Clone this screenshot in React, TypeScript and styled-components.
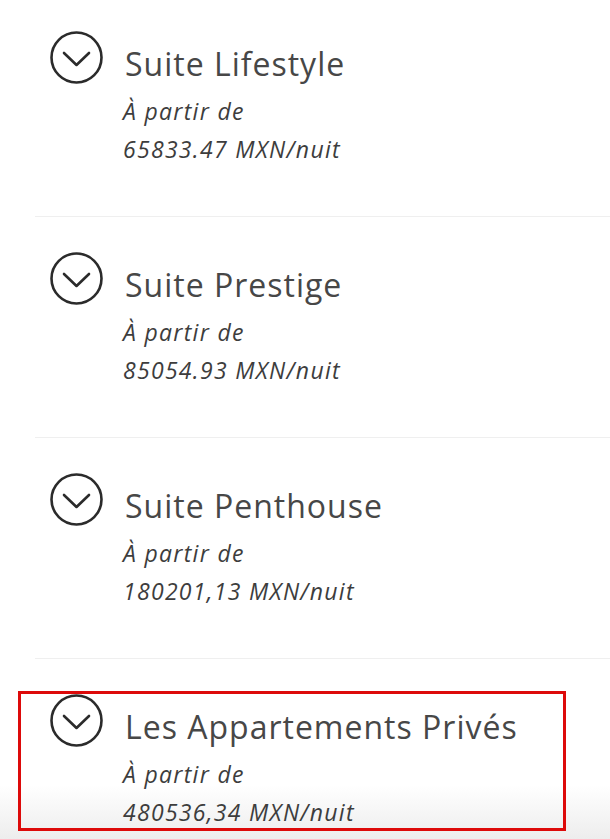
import React from 'react';
import styled, { createGlobalStyle } from 'styled-components';

const GlobalStyle = createGlobalStyle`
  html, body {
    margin: 0;
    padding: 0;
  }
  body {
    background: linear-gradient(to bottom, #ffffff 0, #ffffff 785px, #ededed 839px);
    font-family: "Open Sans", "Liberation Sans", sans-serif;
    overflow: hidden;
  }
`;

const Page = styled.div`
  height: 839px;
  padding-left: 35px;
  overflow: hidden;
`;

const List = styled.ul`
  list-style: none;
  margin: -4px 0 0;
  padding: 0;
`;

const Item = styled.li`
  position: relative;
  box-sizing: border-box;
  height: 221px;
  padding: 35px 0 0 15px;
  border-bottom: 1px solid #efefef;
  display: flex;
  align-items: flex-start;
  gap: 22px;

  &:last-child {
    border-bottom: none;
  }
`;

const Toggle = styled.span`
  flex: 0 0 auto;
  width: 53px;
  height: 53px;
  display: block;
`;

const Body = styled.div`
  display: flex;
  flex-direction: column;
`;

const Title = styled.h3`
  margin: 13px 0 0;
  font-size: 32px;
  line-height: 40px;
  font-weight: 500;
  color: #474747;
  letter-spacing: 1px;
`;

const Price = styled.p`
  margin: 8px 0 0 -2px;
  font-size: 23px;
  line-height: 38px;
  font-style: italic;
  font-weight: 500;
  color: #3d3d3d;
  letter-spacing: 1.3px;
`;

const Highlight = styled.div`
  position: absolute;
  left: -17px;
  top: 32px;
  width: 548px;
  height: 140px;
  box-sizing: border-box;
  border: 3px solid #dd0a0a;
  pointer-events: none;
`;

const ChevronCircle = () => (
  <svg width="53" height="53" viewBox="0 0 53 53" fill="none">
    <circle cx="26.5" cy="26.5" r="25" stroke="#2b2b2b" strokeWidth="2.6" />
    <path d="M14 22 L26.5 34 L39 22" stroke="#2b2b2b" strokeWidth="2.6" strokeLinecap="round" strokeLinejoin="round" />
  </svg>
);

type Suite = { name: string; price: string; selected?: boolean };

const suites: Suite[] = [
  { name: 'Suite Lifestyle', price: '65833.47' },
  { name: 'Suite Prestige', price: '85054.93' },
  { name: 'Suite Penthouse', price: '180201,13' },
  { name: 'Les Appartements Privés', price: '480536,34', selected: true },
];

const App = () => (
  <>
    <GlobalStyle />
    <Page>
      <List>
        {suites.map((s) => (
          <Item key={s.name}>
            <Toggle>
              <ChevronCircle />
            </Toggle>
            <Body>
              <Title>{s.name}</Title>
              <Price>
                À partir de
                <br />
                {s.price} MXN/nuit
              </Price>
            </Body>
            {s.selected && <Highlight />}
          </Item>
        ))}
      </List>
    </Page>
  </>
);

export default App;
